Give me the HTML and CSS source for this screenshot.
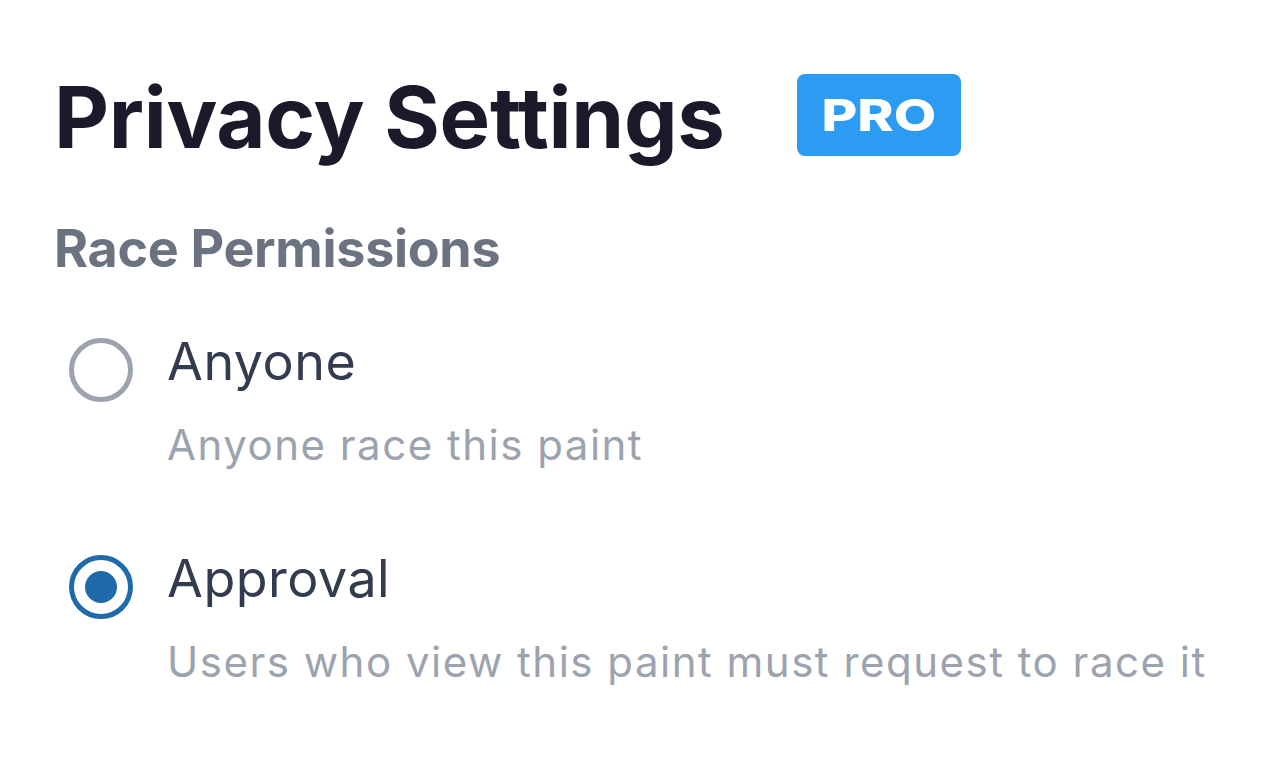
FILE: index.html
```html
<!DOCTYPE html>
<html lang="en">
<head>
<meta charset="utf-8">
<title>Privacy Settings</title>
<link rel="stylesheet" href="styles.css">
</head>
<body>
  <main class="page">
    <header class="header">
      <h1 class="title">Privacy Settings</h1>
      <span class="badge"><span class="badge-text">PRO</span></span>
    </header>
    <h2 class="section-title">Race Permissions</h2>
    <div class="options">
      <label class="option">
        <span class="radio"></span>
        <span class="option-body">
          <span class="option-label">Anyone</span>
          <span class="option-desc">Anyone race this paint</span>
        </span>
      </label>
      <label class="option">
        <span class="radio radio-checked"><span class="radio-dot"></span></span>
        <span class="option-body">
          <span class="option-label">Approval</span>
          <span class="option-desc">Users who view this paint must request to race it</span>
        </span>
      </label>
    </div>
  </main>
</body>
</html>
```

FILE: styles.css
```css
* { box-sizing: border-box; }
html, body {
  margin: 0;
  padding: 0;
  background: #ffffff;
}
body {
  font-family: "Inter", "Noto Sans", sans-serif;
}
.page {
  padding: 68px 0 0 54px;
  display: flex;
  flex-direction: column;
}
.header {
  display: flex;
  align-items: flex-start;
}
.title {
  margin: 0;
  font-size: 85px;
  line-height: 100px;
  font-weight: 700;
  color: #1b1a2a;
  letter-spacing: -0.3px;
}
.badge {
  margin-left: 72px;
  margin-top: 6px;
  width: 164px;
  height: 82px;
  border-radius: 8px;
  background: #2b9cf2;
  display: flex;
  align-items: center;
  justify-content: center;
}
.badge-text {
  display: inline-block;
  font-size: 44px;
  line-height: 44px;
  font-weight: 800;
  color: #ffffff;
  transform: scaleX(1.25);
}
.section-title {
  margin: 51px 0 0 0;
  font-size: 52px;
  line-height: 60px;
  font-weight: 700;
  color: #6b7280;
  letter-spacing: -0.3px;
}
.options {
  margin-top: 53px;
  display: flex;
  flex-direction: column;
  gap: 80px;
}
.option {
  display: flex;
  align-items: flex-start;
  padding-left: 15px;
}
.radio {
  flex: none;
  width: 64px;
  height: 64px;
  margin-top: 6px;
  border: 5px solid #9ca3af;
  border-radius: 50%;
  display: flex;
  align-items: center;
  justify-content: center;
}
.radio-checked {
  border-color: #1f6aab;
}
.radio-dot {
  width: 32px;
  height: 32px;
  border-radius: 50%;
  background: #1f6aab;
}
.option-body {
  margin-left: 34px;
  display: flex;
  flex-direction: column;
}
.option-label {
  font-size: 52px;
  line-height: 60px;
  font-weight: 400;
  color: #323c4e;
  letter-spacing: 0.5px;
}
.option-desc {
  margin-top: 29px;
  font-size: 42px;
  line-height: 48px;
  font-weight: 400;
  color: #9ca3af;
  letter-spacing: 1.5px;
}
```
